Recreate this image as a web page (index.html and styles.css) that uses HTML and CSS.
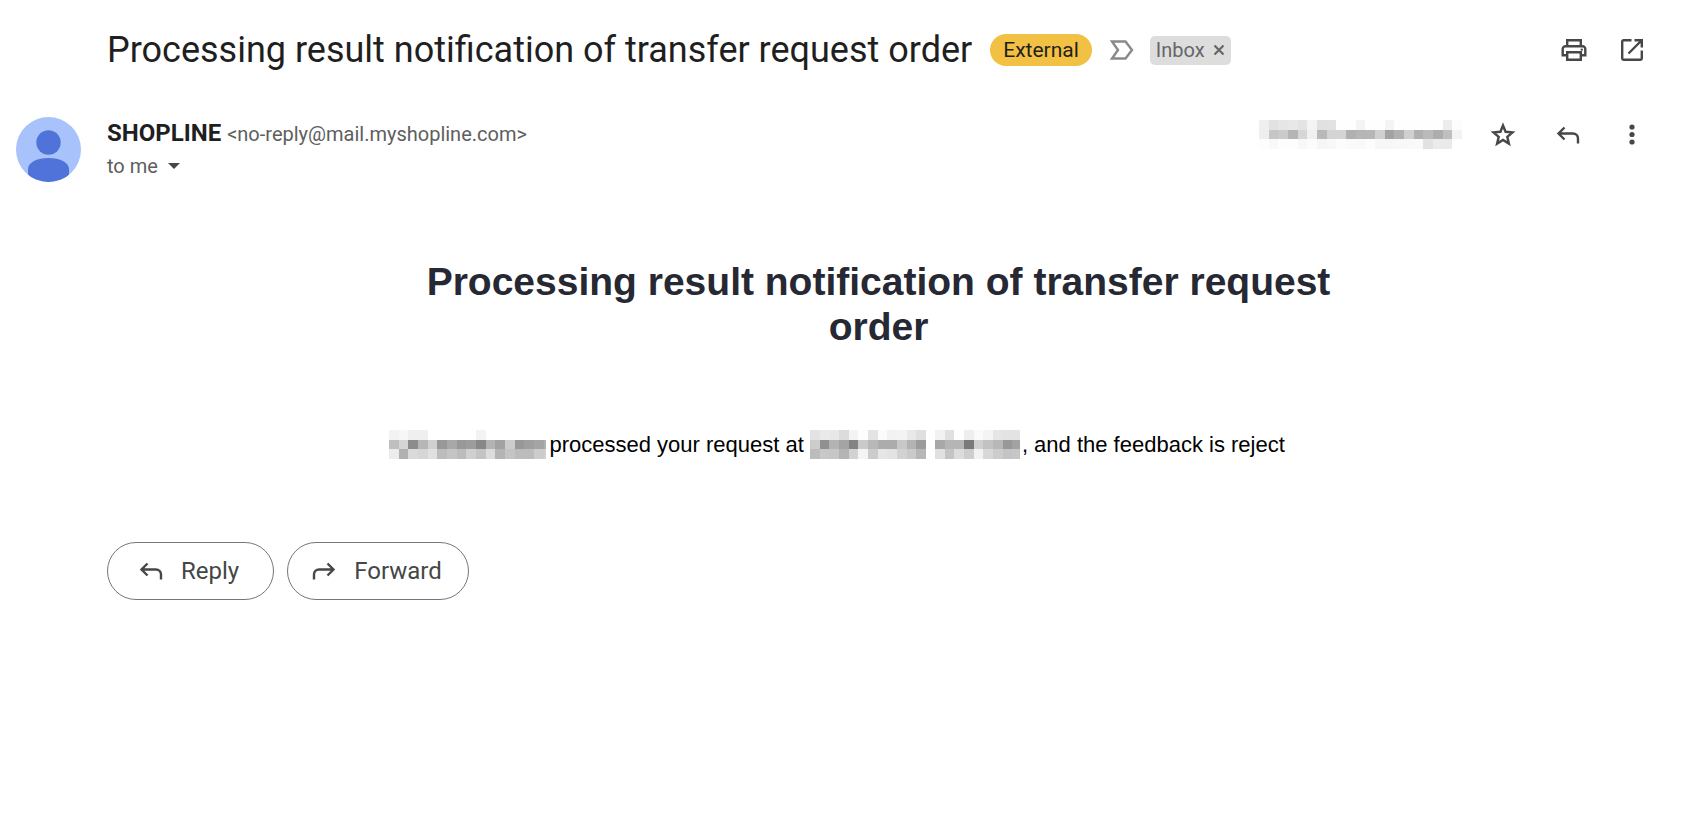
FILE: index.html
```
<!DOCTYPE html>
<html lang="en">
<head>
    <meta charset="UTF-8">
    <title>Processing result notification of transfer request order</title>
    <meta name="viewport" content="width=device-width, initial-scale=1.0">
    <link rel="stylesheet" href="styles.css">
</head>
<body>
    <main class="mail">
        <header class="subject-bar">
            <h1 class="subject">Processing result notification of transfer request order</h1>
            <span class="tag-external">External</span>
            <button class="icon-btn importance" aria-label="Important">
                <svg width="24" height="20" viewBox="0 0 24 20"><path d="M2 1.5h13.5L22 10l-6.500 8.500H2L8 10z" fill="none" stroke="#8a8a8a" stroke-width="2.400"/></svg>
            </button>
            <span class="tag-inbox">Inbox
                <button class="icon-btn" aria-label="Remove label Inbox">
                    <svg width="12" height="12" viewBox="0 0 12 12"><path d="M1.500 1.500l9 9M10.500 1.500l-9 9" stroke="#666" stroke-width="2.200"/></svg>
                </button>
            </span>
            <div class="subject-actions">
                <button class="icon-btn" aria-label="Print all">
                    <svg width="26" height="24" viewBox="0 0 26 24" fill="none" stroke="#474747" stroke-width="2.400">
                        <path d="M6.200 8V2.200h13.600V8"/>
                        <path d="M6 17.300H1.700V11a2.800 2.800 0 0 1 2.800-2.800h17a2.800 2.800 0 0 1 2.800 2.800v6.300H20"/>
                        <path d="M6.200 14.200h13.600v7.600H6.200z"/>
                        <circle cx="20.800" cy="11.600" r="1.200" fill="#474747" stroke="none"/>
                    </svg>
                </button>
                <button class="icon-btn" aria-label="In new window">
                    <svg width="24" height="24" viewBox="0 0 24 24" fill="none" stroke="#474747" stroke-width="2.400">
                        <path d="M11.500 2.200H3.700a1.500 1.500 0 0 0-1.500 1.500v16.600a1.500 1.500 0 0 0 1.500 1.500h16.600a1.500 1.500 0 0 0 1.500-1.500v-7.800"/>
                        <path d="M14.500 2.200h7.300v7.300M21.500 2.500L8.500 15.500"/>
                    </svg>
                </button>
            </div>
        </header>

        <section class="sender-bar">
            <svg class="avatar" width="65" height="65" viewBox="0 0 65 65">
                <defs><clipPath id="avatarClip"><circle cx="32.500" cy="32.500" r="32.500"/></clipPath></defs>
                <g clip-path="url(#avatarClip)">
                    <rect width="65" height="65" fill="#a8c3fb"/>
                    <circle cx="32.500" cy="25.500" r="12.200" fill="#4f73d9"/>
                    <path d="M12 65V52c0-6.500 9-11 20.500-11S53 45.500 53 52v13z" fill="#4f73d9"/>
                </g>
            </svg>
            <div class="sender">
                <div class="from"><b>SHOPLINE</b> <span class="address">&lt;no-reply@mail.myshopline.com&gt;</span></div>
                <button class="to">to me
                    <svg width="12" height="6" viewBox="0 0 12 6"><path d="M0 0h12L6 6z" fill="#474747"/></svg>
                </button>
            </div>
            <div class="message-actions">
                <svg class="mosaic" data-name="date" width="203" height="29"></svg>
                <button class="icon-btn" aria-label="Star">
                    <svg width="26" height="26" viewBox="0 0 26 26"><path d="M13 3.500l2.600 6.300 6.900.6-5.200 4.500 1.600 6.700L13 18l-5.900 3.600 1.600-6.700-5.200-4.500 6.900-.6z" fill="none" stroke="#474747" stroke-width="2.400"/></svg>
                </button>
                <button class="icon-btn" aria-label="Reply">
                    <svg width="24" height="20" viewBox="0 0 24 20"><path d="M8.500 2.500L2.500 8.500l6 6M2.500 8.500H17a5 5 0 0 1 5 5v5" fill="none" stroke="#474747" stroke-width="2.400"/></svg>
                </button>
                <button class="icon-btn" aria-label="More">
                    <svg width="24" height="24" viewBox="0 0 24 24" fill="#474747"><circle cx="12" cy="4" r="2.600"/><circle cx="12" cy="11.500" r="2.600"/><circle cx="12" cy="19" r="2.600"/></svg>
                </button>
            </div>
        </section>

        <div class="message-wrap">
            <article class="message">
                <h2>Processing result notification of transfer request order</h2>
                <p><svg class="mosaic" data-name="user" width="157" height="29"></svg><span class="processed">processed your request at</span> <svg class="mosaic" data-name="day" width="116" height="29"></svg><svg class="mosaic time" data-name="time" width="85" height="29"></svg><span>, and the feedback is reject</span></p>
            </article>
        </div>

        <footer class="reply-bar">
            <button class="pill reply">
                <svg width="24" height="20" viewBox="0 0 24 20"><path d="M8.500 2.500L2.500 8.500l6 6M2.500 8.500H17a5 5 0 0 1 5 5v5" fill="none" stroke="#474747" stroke-width="2.400"/></svg>
                Reply
            </button>
            <button class="pill forward">
                <svg width="24" height="20" viewBox="0 0 24 20"><path d="M15.500 2.500l6 6-6 6M21.500 8.500H7a5 5 0 0 0-5 5v5" fill="none" stroke="#474747" stroke-width="2.400"/></svg>
                Forward
            </button>
        </footer>
    </main>

    <script src="mosaic.js"></script>
</body>
</html>
```
FILE: styles.css
```
body {
    margin: 0;
    background: #fff;
    color: #1f1f1f;
    font-family: Roboto, "Liberation Sans", sans-serif;
    font-size: 20px;
}

h1, h2, p {
    margin: 0;
}

button {
    font-family: inherit;
    background: none;
    border: none;
    padding: 0;
    cursor: pointer;
}

svg {
    display: block;
    flex: none;
}

.mail {
    padding: 24px 50px 24px 16px;
}

.icon-btn {
    display: flex;
    align-items: center;
    justify-content: center;
}

/* subject line */
.subject-bar {
    display: flex;
    align-items: center;
    min-height: 52px;
    padding-left: 91px;
}

.subject {
    font-size: 36px;
    font-weight: 400;
    line-height: 52px;
}

.tag-external {
    margin-left: 18px;
    padding: 0 13px;
    border-radius: 16px;
    background: #f2c043;
    font-size: 21px;
    line-height: 32px;
}

.importance {
    margin-left: 18px;
}

.tag-inbox {
    display: flex;
    align-items: center;
    gap: 8px;
    margin-left: 16px;
    padding: 0 6px;
    border-radius: 5px;
    background: #ddd;
    color: #666;
    font-size: 20px;
    line-height: 29px;
}

.subject-actions {
    display: flex;
    align-items: center;
    gap: 33px;
    margin-left: auto;
    padding-right: 6px;
}

/* sender */
.sender-bar {
    display: flex;
    align-items: flex-start;
    margin-top: 41px;
}

.sender {
    margin-left: 26px;
}

.from {
    font-size: 24px;
    line-height: 32px;
}

.address {
    color: #5e5e5e;
    font-size: 20px;
}

.to {
    display: flex;
    align-items: center;
    gap: 10px;
    color: #5e5e5e;
    font-size: 20px;
    line-height: 32px;
}

.message-actions {
    display: flex;
    align-items: center;
    gap: 40px;
    margin-left: auto;
    padding: 3px 6px 0 0;
}

.message-actions .mosaic {
    margin-right: -12px;
}

/* message body */
.message-wrap {
    padding-left: 91px;
}

.message {
    max-width: 980px;
    margin: 77px auto 0;
    font-family: "Liberation Sans", Arial, sans-serif;
    color: #000;
}

.message h2 {
    padding: 0 32px;
    color: #262833;
    font-size: 39px;
    line-height: 45px;
    text-align: center;
}

.message p {
    display: flex;
    align-items: center;
    margin-top: 81px;
    font-size: 22px;
    line-height: 29px;
}

.processed {
    margin: 0 6px 0 4px;
}

.time {
    margin: 0 2px 0 9px;
}

/* reply and forward */
.reply-bar {
    display: flex;
    gap: 13px;
    margin-top: 83px;
    padding-left: 91px;
}

.pill {
    display: flex;
    align-items: center;
    gap: 18px;
    height: 58px;
    padding: 0 34px 0 31px;
    border: 1px solid #747775;
    border-radius: 29px;
    color: #444746;
    font-size: 24px;
}

.forward {
    padding: 0 26px 0 24px;
}
```
FILE: mosaic.js
```
// grey levels of the masked words, one hex pair per cell
const MOSAICS = {
    date: [
        'efe2e6e8e4f4e1e2fefef4fefef4fefefefefeecfd',
        'eec6cbb5d6f0b9d4d4b0b6b6d0a3b0d0b0baadbff3',
        'fdf9fdfdf8fcf6f8fcfaf9fcf7f7f8f9fae2ebeaff'
    ],
    user: [
        'f2f7efeffffffffffff3ffffffffffffff',
        'bfd58cb6d098a8989c88b3a2cc989fa4b0',
        'ecb1dad6e0bcc4bcd0c4dcb4c4bcbcccd0'
    ],
    day: [
        'e3eae8dcf3fde3fbf2f3e8df',
        'cc90b3a483cab8acacc8b39c',
        'bcc8c6b4d2f4cce6e3d2cab7'
    ],
    time: [
        'f2e0feeefaf4e5e3e3',
        'a8b5b57ad0c2b898a2',
        'e0c4dccef2d8ccc4c6'
    ]
};

const CELL = 29 / 3;

document.querySelectorAll('.mosaic').forEach(svg => {
    svg.innerHTML = MOSAICS[svg.dataset.name]
        .map((row, y) => row.match(/../g)
            .map((g, x) => `<rect x="${x * CELL}" y="${y * CELL}" width="${CELL}" height="${CELL}" fill="#${g}${g}${g}" shape-rendering="crispEdges"/>`)
            .join(''))
        .join('');
});
```
